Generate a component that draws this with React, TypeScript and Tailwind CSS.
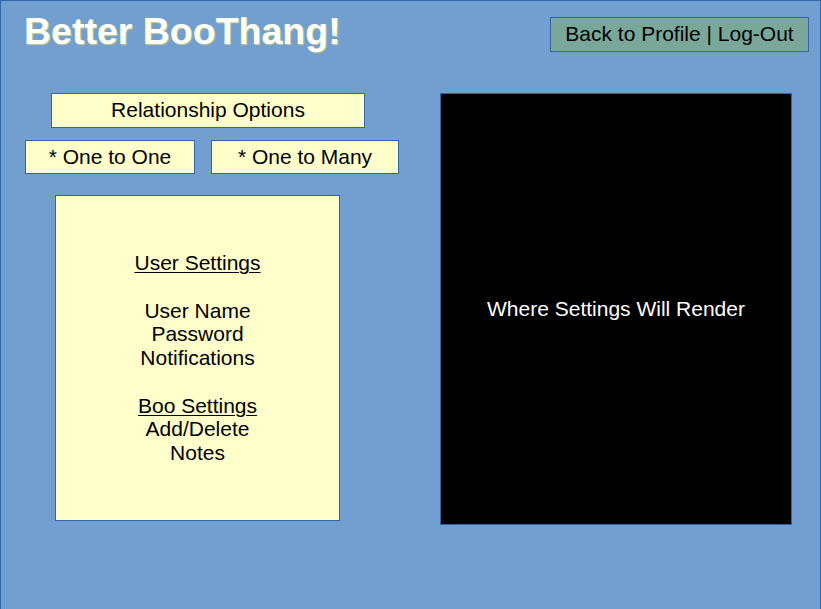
import React from "react";

const font = { fontFamily: '"Liberation Sans", Arial, sans-serif' };

export default function App() {
  return (
    <div
      className="w-[821px] h-[609px] bg-[#729fcf] border-l border-t border-r border-[#3465a4] overflow-hidden flex flex-col"
      style={font}
    >
      <div className="flex justify-between items-start">
        <h1 className="ml-[23px] mt-[12px] text-[37.5px] leading-[36px] font-bold text-white [text-shadow:1px_1px_1px_#c9c98a]">
          Better BooThang!
        </h1>
        <div className="mt-[16px] mr-[11px] w-[259px] h-[35px] pb-[2px] bg-[#79a89b] border border-[#3465a4] flex items-center justify-center text-[21px] text-black">
          Back to Profile | Log-Out
        </div>
      </div>
      <div className="flex items-start mt-[41px]">
        <div className="ml-[24px] w-[374px] flex flex-col">
          <div className="ml-[26px] w-[314px] h-[35px] pb-[2px] bg-[#ffffcc] border border-[#3465a4] flex items-center justify-center text-[21px] text-black">
            Relationship Options
          </div>
          <div className="flex gap-[16px] mt-[12px]">
            <div className="w-[170px] h-[34px] bg-[#ffffcc] border border-[#3465a4] flex items-center justify-center text-[21px] text-black">
              * One to One
            </div>
            <div className="w-[188px] h-[34px] bg-[#ffffcc] border border-[#3465a4] flex items-center justify-center text-[21px] text-black">
              * One to Many
            </div>
          </div>
          <div className="ml-[30px] mt-[21px] w-[285px] h-[326px] bg-[#ffffcc] border border-[#3465a4] flex flex-col items-center justify-center text-[21px] leading-[23.7px] text-black text-center">
            <span className="underline decoration-1 underline-offset-2">User Settings</span>
            <span>&nbsp;</span>
            <span>User Name</span>
            <span>Password</span>
            <span>Notifications</span>
            <span>&nbsp;</span>
            <span className="underline decoration-1 underline-offset-2">Boo Settings</span>
            <span>Add/Delete</span>
            <span>Notes</span>
          </div>
        </div>
        <div className="ml-[41px] w-[352px] h-[432px] bg-black border border-[#3465a4] flex items-center justify-center text-[21px] text-white">
          Where Settings Will Render
        </div>
      </div>
    </div>
  );
}
